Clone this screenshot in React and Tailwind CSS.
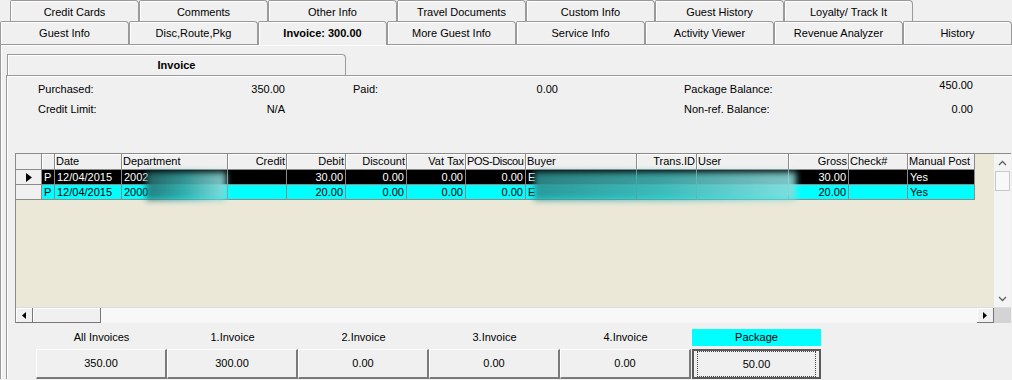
import { useState } from 'react'

const topTabs = ['Credit Cards', 'Comments', 'Other Info', 'Travel Documents', 'Custom Info', 'Guest History', 'Loyalty/ Track It']
const mainTabs = ['Guest Info', 'Disc,Route,Pkg', 'Invoice: 300.00', 'More Guest Info', 'Service Info', 'Activity Viewer', 'Revenue Analyzer', 'History']

const columns = [
  { key: 'p', label: '', w: 'w-[13px]', align: 'text-left' },
  { key: 'date', label: 'Date', w: 'w-[67px]', align: 'text-left' },
  { key: 'dept', label: 'Department', w: 'w-[106px]', align: 'text-left' },
  { key: 'credit', label: 'Credit', w: 'w-[59px]', align: 'text-right' },
  { key: 'debit', label: 'Debit', w: 'w-[59px]', align: 'text-right' },
  { key: 'discount', label: 'Discount', w: 'w-[61px]', align: 'text-right' },
  { key: 'vat', label: 'Vat Tax', w: 'w-[59px]', align: 'text-right' },
  { key: 'pos', label: 'POS-Discou', w: 'w-[60px]', align: 'text-right', head: 'text-left tracking-[-0.4px]' },
  { key: 'buyer', label: 'Buyer', w: 'w-[111px]', align: 'text-left' },
  { key: 'trans', label: 'Trans.ID', w: 'w-[60px]', align: 'text-right' },
  { key: 'user', label: 'User', w: 'w-[92px]', align: 'text-left' },
  { key: 'gross', label: 'Gross', w: 'w-[60px]', align: 'text-right' },
  { key: 'check', label: 'Check#', w: 'w-[59px]', align: 'text-left' },
  { key: 'manual', label: 'Manual Post', w: 'w-[67px]', align: 'text-left' },
]

const rows = [
  { p: 'P', date: '12/04/2015', dept: '2002', credit: '', debit: '30.00', discount: '0.00', vat: '0.00', pos: '0.00', buyer: 'E', trans: '', user: '', gross: '30.00', check: '', manual: 'Yes' },
  { p: 'P', date: '12/04/2015', dept: '2000', credit: '', debit: '20.00', discount: '0.00', vat: '0.00', pos: '0.00', buyer: 'E', trans: '', user: '', gross: '20.00', check: '', manual: 'Yes' },
]

const totals = [
  { label: 'All Invoices', value: '350.00' },
  { label: '1.Invoice', value: '300.00' },
  { label: '2.Invoice', value: '0.00' },
  { label: '3.Invoice', value: '0.00' },
  { label: '4.Invoice', value: '0.00' },
  { label: 'Package', value: '50.00', active: true },
]

function Tab({ label, active, last }) {
  return (
    <div
      className={
        'flex items-center justify-center border-l border-t border-r border-[#9a9a9a] rounded-tr-[4px] rounded-tl-[2px] bg-[#f0f0f0] shadow-[inset_1px_1px_0_#ffffff] ' +
        (last ? 'flex-1 ' : 'w-[129px] ') +
        (active ? 'h-[24px] -mt-[1px] font-bold relative z-10 -mb-[1px]' : 'h-[23px]')
      }
    >
      {label}
    </div>
  )
}

export default function App() {
  const [selected, setSelected] = useState(0)

  return (
    <div className="w-[1012px] h-[380px] overflow-hidden bg-[#f0f0f0] text-[11px] text-black" style={{ fontFamily: '"Liberation Sans", Arial, sans-serif' }}>
      {/* tab rows */}
      <div className="flex pl-[10px] h-[22px] pt-[1px] -mt-[1px]">
        {topTabs.map((t) => (
          <Tab key={t} label={t} />
        ))}
      </div>
      <div className="flex h-[23px] items-end">
        {mainTabs.map((t, i) => (
          <Tab key={t} label={t} active={i === 2} last={i === mainTabs.length - 1} />
        ))}
      </div>

      {/* outer panel */}
      <div className="border-t border-l border-[#9a9a9a] shadow-[inset_1px_1px_0_#ffffff] h-[335px] pt-[9px]">
        <div className="ml-[5px]">
          <div className="w-[339px] h-[21px] ml-[1px] flex items-center justify-center font-bold border-l border-t border-r border-[#9a9a9a] rounded-tr-[4px] shadow-[inset_1px_1px_0_#ffffff]">
            Invoice
          </div>
          <div className="border-t border-l border-[#9a9a9a] shadow-[inset_1px_1px_0_#ffffff] pt-[3px]">
            {/* summary */}
            <div className="flex h-[20px] items-center pl-[31px]">
              <div className="w-[247px] flex justify-between"><span>Purchased:</span><span>350.00</span></div>
              <div className="w-[205px] ml-[68px] flex justify-between"><span>Paid:</span><span>0.00</span></div>
              <div className="w-[289px] ml-[126px] flex justify-between"><span>Package Balance:</span><span className="-mt-[4px]">450.00</span></div>
            </div>
            <div className="flex h-[20px] items-center pl-[31px]">
              <div className="w-[247px] flex justify-between"><span>Credit Limit:</span><span>N/A</span></div>
              <div className="w-[289px] ml-[399px] flex justify-between"><span>Non-ref. Balance:</span><span>0.00</span></div>
            </div>

            {/* grid */}
            <div className="mt-[34px] ml-[8px] w-[996px] border-t border-l border-[#8a8a8a] relative">
              <div className="flex">
                <div className="w-[978px] bg-[#ebe8d8]">
                  <div className="flex h-[16px] leading-[15px]">
                    <div className="w-[26px] bg-[#f0f0f0] border-r border-b border-[#8a8a8a]" />
                    {columns.map((c) => (
                      <div key={c.key} className={c.w + ' ' + (c.head || c.align) + ' px-[1px] bg-[#f0f0f0] border-r border-b border-[#8a8a8a] overflow-hidden whitespace-nowrap shadow-[inset_1px_1px_0_#ffffff]'}>
                        {c.label}
                      </div>
                    ))}
                  </div>
                  {rows.map((r, i) => {
                    const on = i === selected
                    return (
                      <div key={i} className="flex h-[15px] leading-[14px] cursor-default" onClick={() => setSelected(i)}>
                        <div className="w-[26px] bg-[#f0f0f0] border-r border-b border-[#8a8a8a] flex items-center justify-center">
                          {on && (
                            <svg width="6" height="9" viewBox="0 0 6 9"><path d="M0 0 L6 4.5 L0 9 Z" fill="#000" /></svg>
                          )}
                        </div>
                        {columns.map((c) => (
                          <div key={c.key} className={c.w + ' ' + c.align + ' px-[2px] border-r border-b border-[#8a8a8a] overflow-hidden whitespace-nowrap ' + (on ? 'bg-black text-white' : 'bg-[#00ffff] text-black')}>
                            {r[c.key]}
                          </div>
                        ))}
                      </div>
                    )
                  })}
                  <div className="h-[106px]" />
                </div>
                {/* vertical scrollbar */}
                <div className="w-[17px] h-[153px] bg-[#f4f4f4] flex flex-col">
                  <div className="h-[17px] flex items-center justify-center">
                    <svg width="9" height="6" viewBox="0 0 9 6"><path d="M1 5 L4.5 1.5 L8 5" fill="none" stroke="#606060" strokeWidth="1.3" /></svg>
                  </div>
                  <div className="h-[20px] mx-[1px] bg-[#f8f8f8] border border-[#c8c8c8]" />
                  <div className="flex-1" />
                  <div className="h-[17px] flex items-center justify-center">
                    <svg width="9" height="6" viewBox="0 0 9 6"><path d="M1 1 L4.5 4.5 L8 1" fill="none" stroke="#606060" strokeWidth="1.3" /></svg>
                  </div>
                </div>
              </div>
              {/* horizontal scrollbar */}
              <div className="flex h-[16px] bg-[#f8f8f8] border-t border-[#dcdcdc]">
                <div className="w-[17px] bg-[#f0f0f0] border-r border-b border-[#777] shadow-[inset_1px_1px_0_#ffffff] flex items-center justify-center">
                  <svg width="4" height="7" viewBox="0 0 4 7"><path d="M4 0 L0 3.5 L4 7 Z" fill="#000" /></svg>
                </div>
                <div className="w-[68px] bg-[#f0f0f0] border-r border-b border-[#777] shadow-[inset_1px_1px_0_#ffffff]" />
                <div className="flex-1" />
                <div className="w-[17px] bg-[#f0f0f0] border-r border-b border-[#777] shadow-[inset_1px_1px_0_#ffffff] flex items-center justify-center">
                  <svg width="4" height="7" viewBox="0 0 4 7"><path d="M0 0 L4 3.5 L0 7 Z" fill="#000" /></svg>
                </div>
                <div className="w-[17px] bg-[#d4d4d4]" />
              </div>

              {/* blurred text */}
              <div className="absolute left-[130px] top-[18px] w-[80px] h-[28px] blur-[3px] bg-gradient-to-r from-[#276f70] via-[#3aa7a7] to-[#8fd9d9] opacity-90 pointer-events-none" />
              <div className="absolute left-[518px] top-[18px] w-[262px] h-[28px] blur-[3px] bg-gradient-to-r from-[#2f8f90] via-[#45b5b5] to-[#8edcdc] opacity-90 pointer-events-none" />
            </div>

            {/* totals */}
            <div className="flex mt-[6px] ml-[29px]">
              {totals.map((t) => (
                <div key={t.label} className="w-[131px] flex flex-col">
                  <div className={'h-[17px] mx-[1px] flex items-center justify-center ' + (t.active ? 'bg-[#00ffff]' : '')}>{t.label}</div>
                  <div
                    className={
                      'mt-[3px] h-[30px] flex items-center justify-center bg-[#f0f0f0] ' +
                      (t.active
                        ? 'border-2 border-[#5a5a5a] mx-[1px]'
                        : 'border-t border-l border-white border-r-2 border-b-2 border-r-[#7a7a7a] border-b-[#7a7a7a]')
                    }
                  >
                    {t.active ? (
                      <div className="w-full h-full m-[3px] border border-dotted border-[#444] flex items-center justify-center">{t.value}</div>
                    ) : (
                      t.value
                    )}
                  </div>
                </div>
              ))}
            </div>
          </div>
        </div>
      </div>
    </div>
  )
}
